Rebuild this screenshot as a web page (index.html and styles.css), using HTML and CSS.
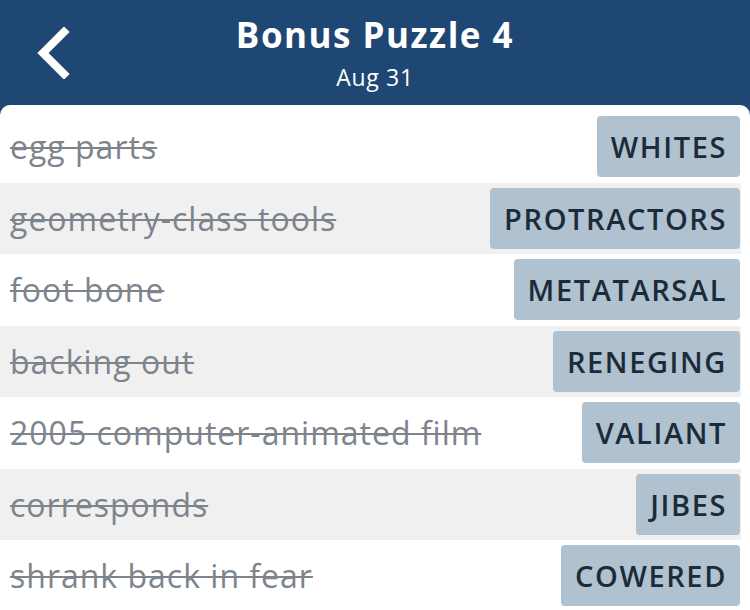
FILE: index.html
```html
<!DOCTYPE html>
<html lang="en">
<head>
    <meta charset="UTF-8">
    <meta name="viewport" content="width=device-width, initial-scale=1.0">
    <title>Bonus Puzzle 4</title>
    <link rel="stylesheet" href="styles.css">
</head>
<body>
    <div class="app">
        <div class="header">
            <button class="back" aria-label="Back">
                <svg width="36" height="52" viewBox="0 0 36 52">
                    <path d="M30 5 L9 26 L30 47" fill="none" stroke="#fff" stroke-width="8" stroke-linecap="square" stroke-linejoin="miter"/>
                </svg>
            </button>
            <div class="title">
                <h1>Bonus Puzzle 4</h1>
                <div class="date">Aug 31</div>
            </div>
        </div>
        <div class="panel">
            <div class="row"><span class="clue">egg parts</span><span class="answer">WHITES</span></div>
            <div class="row alt"><span class="clue">geometry-class tools</span><span class="answer">PROTRACTORS</span></div>
            <div class="row"><span class="clue">foot bone</span><span class="answer">METATARSAL</span></div>
            <div class="row alt"><span class="clue">backing out</span><span class="answer">RENEGING</span></div>
            <div class="row"><span class="clue">2005 computer-animated film</span><span class="answer">VALIANT</span></div>
            <div class="row alt"><span class="clue">corresponds</span><span class="answer">JIBES</span></div>
            <div class="row"><span class="clue">shrank back in fear</span><span class="answer">COWERED</span></div>
        </div>
    </div>
</body>
</html>
```

FILE: styles.css
```css
body {
    margin: 0;
    font-family: "Open Sans", Lato, sans-serif;
    background: #fff;
}
.app {
    width: 750px;
    height: 610px;
    overflow: hidden;
    background: #1f4773;
}
.header {
    height: 105px;
    display: flex;
    align-items: center;
    position: relative;
}
.back {
    position: absolute;
    left: 34px;
    top: 27px;
    background: none;
    border: none;
    padding: 0;
    cursor: pointer;
}
.title {
    flex: 1;
    text-align: center;
    color: #fff;
}
.title h1 {
    margin: 0;
    font-size: 35px;
    font-weight: 700;
    line-height: 40px;
    letter-spacing: 1.5px;
}
.date {
    font-size: 23px;
    line-height: 26px;
    letter-spacing: 0.7px;
    margin-top: 9px;
}
.panel {
    background: #fff;
    border-radius: 10px 10px 0 0;
    padding-top: 6px;
    height: 505px;
}
.row {
    height: 71.5px;
    width: 741px;
    display: flex;
    align-items: center;
    justify-content: space-between;
    box-sizing: border-box;
    padding: 0 1px 0 10px;
}
.row.alt {
    background: #f0f0f0;
}
.clue {
    font-size: 32px;
    color: #7e848c;
    letter-spacing: 1px;
    text-decoration: line-through;
    text-decoration-thickness: 2px;
}
.answer {
    background: #b0c1cf;
    color: #1c2b3a;
    font-size: 29px;
    font-weight: 600;
    letter-spacing: 1.6px;
    height: 61px;
    line-height: 61px;
    padding: 0 13px 0 14px;
    border-radius: 4px;
}
```
